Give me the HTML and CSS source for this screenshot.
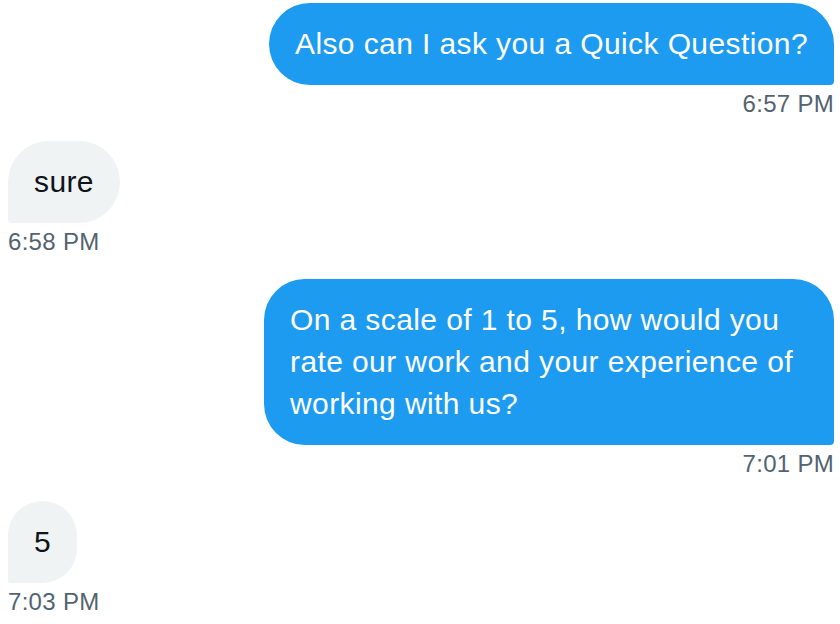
FILE: index.html
```html
<!DOCTYPE html>
<html lang="en">
<head>
    <meta charset="UTF-8">
    <meta name="viewport" content="width=device-width, initial-scale=1.0">
    <title>Messages</title>
    <link rel="stylesheet" href="styles.css">
</head>
<body>
    <div class="chat">
        <div class="msg sent">
            <div class="bubble">Also can I ask you a Quick Question?</div>
            <div class="time">6:57 PM</div>
        </div>
        <div class="msg received">
            <div class="bubble">sure</div>
            <div class="time">6:58 PM</div>
        </div>
        <div class="msg sent">
            <div class="bubble">On a scale of 1 to 5, how would you rate our work and your experience of working with us?</div>
            <div class="time">7:01 PM</div>
        </div>
        <div class="msg received">
            <div class="bubble">5</div>
            <div class="time">7:03 PM</div>
        </div>
    </div>
</body>
</html>
```

FILE: styles.css
```css
body {
    margin: 0;
    padding: 3px 6px 0 8px;
    background: #fff;
    font-family: "Liberation Sans", Arial, sans-serif;
}
.chat {
    display: flex;
    flex-direction: column;
    gap: 23px;
}
.msg {
    display: flex;
    flex-direction: column;
}
.sent {
    align-items: flex-end;
}
.received {
    align-items: flex-start;
}
.bubble {
    font-size: 30px;
    letter-spacing: 0.4px;
    line-height: 42px;
    padding: 20px 26px;
    border-radius: 41px;
}
.sent .bubble {
    background-color: #1d9bf0;
    color: #fff;
    border-bottom-right-radius: 4px;
    max-width: 518px;
}
.received .bubble {
    background-color: #eff3f4;
    color: #0f1419;
    border-bottom-left-radius: 4px;
}
.time {
    margin-top: 5px;
    font-size: 24px;
    letter-spacing: 0.3px;
    line-height: 28px;
    color: #536471;
}
```
